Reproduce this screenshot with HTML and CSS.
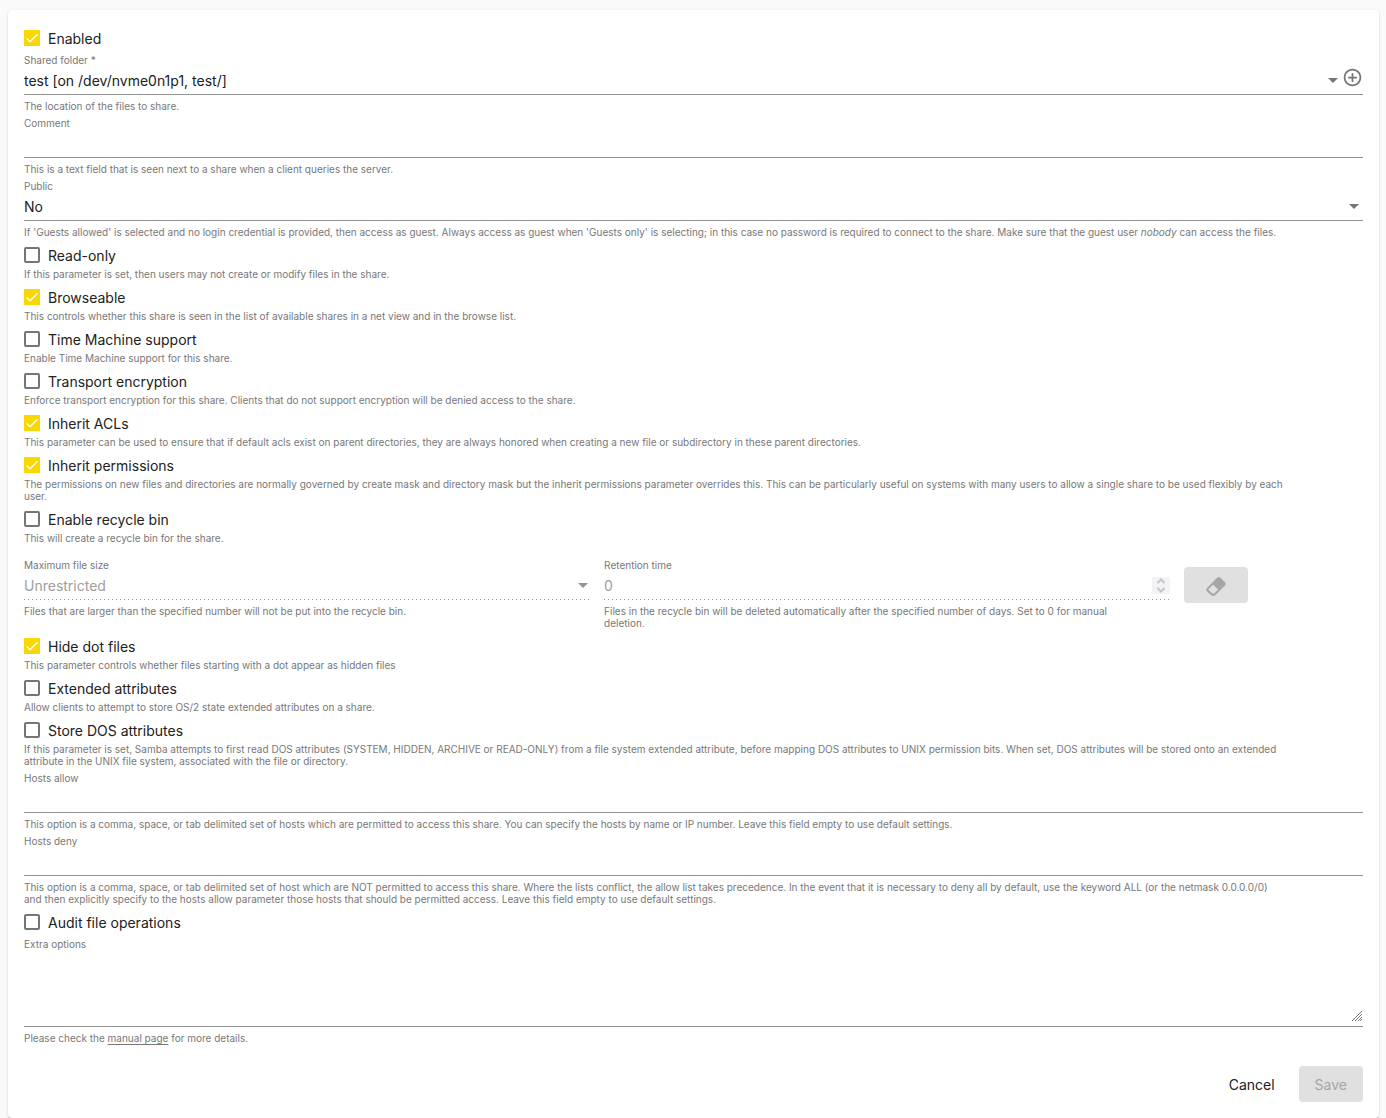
FILE: index.html
```html
<!DOCTYPE html>
<html lang="en">
<head>
    <meta charset="UTF-8">
    <meta name="viewport" content="width=device-width, initial-scale=1.0">
    <title>SMB/CIFS Share</title>
    <link rel="stylesheet" href="styles.css">
</head>
<body>
    <form class="card">
        <div class="check">
            <label><input type="checkbox" checked>Enabled</label>
        </div>

        <div class="field">
            <label for="sharedFolder">Shared folder *</label>
            <div class="control">
                <select id="sharedFolder">
                    <option>test [on /dev/nvme0n1p1, test/]</option>
                </select>
                <span class="arrow"></span>
                <button type="button" class="icon-btn" aria-label="Create">
                    <svg viewBox="0 0 24 24"><path d="M13 7h-2v4H7v2h4v4h2v-4h4v-2h-4V7zm-1-5C6.48 2 2 6.48 2 12s4.480 10 10 10 10-4.480 10-10S17.520 2 12 2zm0 18c-4.410 0-8-3.590-8-8s3.590-8 8-8 8 3.590 8 8-3.590 8-8 8z"/></svg>
                </button>
            </div>
            <p class="hint">The location of the files to share.</p>
        </div>

        <div class="field">
            <label for="comment">Comment</label>
            <div class="control"><input type="text" id="comment"></div>
            <p class="hint">This is a text field that is seen next to a share when a client queries the server.</p>
        </div>

        <div class="field">
            <label for="public">Public</label>
            <div class="control">
                <select id="public">
                    <option>No</option>
                    <option>Guests allowed</option>
                    <option>Guests only</option>
                </select>
                <span class="arrow arrow-end"></span>
            </div>
            <p class="hint">If 'Guests allowed' is selected and no login credential is provided, then access as guest. Always access as guest when 'Guests only' is selecting; in this case no password is required to connect to the share. Make sure that the guest user <em>nobody</em> can access the files.</p>
        </div>

        <div class="check">
            <label><input type="checkbox">Read-only</label>
            <p class="hint">If this parameter is set, then users may not create or modify files in the share.</p>
        </div>
        <div class="check">
            <label><input type="checkbox" checked>Browseable</label>
            <p class="hint">This controls whether this share is seen in the list of available shares in a net view and in the browse list.</p>
        </div>
        <div class="check">
            <label><input type="checkbox">Time Machine support</label>
            <p class="hint">Enable Time Machine support for this share.</p>
        </div>
        <div class="check">
            <label><input type="checkbox">Transport encryption</label>
            <p class="hint">Enforce transport encryption for this share. Clients that do not support encryption will be denied access to the share.</p>
        </div>
        <div class="check">
            <label><input type="checkbox" checked>Inherit ACLs</label>
            <p class="hint">This parameter can be used to ensure that if default acls exist on parent directories, they are always honored when creating a new file or subdirectory in these parent directories.</p>
        </div>
        <div class="check">
            <label><input type="checkbox" checked>Inherit permissions</label>
            <p class="hint">The permissions on new files and directories are normally governed by create mask and directory mask but the inherit permissions parameter overrides this. This can be particularly useful on systems with many users to allow a single share to be used flexibly by each user.</p>
        </div>
        <div class="check">
            <label><input type="checkbox">Enable recycle bin</label>
            <p class="hint">This will create a recycle bin for the share.</p>
        </div>

        <div class="recycle">
            <div class="field disabled">
                <label for="maxSize">Maximum file size</label>
                <div class="control">
                    <select id="maxSize" disabled>
                        <option>Unrestricted</option>
                    </select>
                    <span class="arrow"></span>
                </div>
                <p class="hint">Files that are larger than the specified number will not be put into the recycle bin.</p>
            </div>
            <div class="field disabled">
                <label for="retention">Retention time</label>
                <div class="control">
                    <input type="number" id="retention" value="0" disabled>
                    <svg class="spinner" viewBox="0 0 18 17"><path d="M5.500 6 9 2.500 12.500 6M5.500 11 9 14.500 12.500 11"/></svg>
                </div>
                <p class="hint">Files in the recycle bin will be deleted automatically after the specified number of days. Set to 0 for manual deletion.</p>
            </div>
            <button type="button" class="btn btn-disabled" aria-label="Empty recycle bin" disabled>
                <svg viewBox="0 0 24 24"><path d="M16.240 3.560l4.950 4.940c.78.790.78 2.050 0 2.840L12 20.530a4.008 4.008 0 0 1-5.660 0L2.810 17c-.78-.79-.78-2.050 0-2.840l10.600-10.600c.79-.78 2.050-.78 2.830 0M4.220 15.580l3.540 3.530c.78.790 2.040.790 2.830 0l3.530-3.530-4.950-4.950-4.950 4.950z"/></svg>
            </button>
        </div>

        <div class="check">
            <label><input type="checkbox" checked>Hide dot files</label>
            <p class="hint">This parameter controls whether files starting with a dot appear as hidden files</p>
        </div>
        <div class="check">
            <label><input type="checkbox">Extended attributes</label>
            <p class="hint">Allow clients to attempt to store OS/2 state extended attributes on a share.</p>
        </div>
        <div class="check">
            <label><input type="checkbox">Store DOS attributes</label>
            <p class="hint">If this parameter is set, Samba attempts to first read DOS attributes (SYSTEM, HIDDEN, ARCHIVE or READ-ONLY) from a file system extended attribute, before mapping DOS attributes to UNIX permission bits. When set, DOS attributes will be stored onto an extended attribute in the UNIX file system, associated with the file or directory.</p>
        </div>

        <div class="field">
            <label for="hostsAllow">Hosts allow</label>
            <div class="control"><input type="text" id="hostsAllow"></div>
            <p class="hint">This option is a comma, space, or tab delimited set of hosts which are permitted to access this share. You can specify the hosts by name or IP number. Leave this field empty to use default settings.</p>
        </div>
        <div class="field">
            <label for="hostsDeny">Hosts deny</label>
            <div class="control"><input type="text" id="hostsDeny"></div>
            <p class="hint">This option is a comma, space, or tab delimited set of host which are NOT permitted to access this share. Where the lists conflict, the allow list takes precedence. In the event that it is necessary to deny all by default, use the keyword ALL (or the netmask 0.0.0.0/0) and then explicitly specify to the hosts allow parameter those hosts that should be permitted access. Leave this field empty to use default settings.</p>
        </div>

        <div class="check">
            <label><input type="checkbox">Audit file operations</label>
        </div>

        <div class="field">
            <label for="extraOptions">Extra options</label>
            <div class="control"><textarea id="extraOptions"></textarea></div>
            <p class="hint">Please check the <a href="#">manual page</a> for more details.</p>
        </div>

        <div class="actions">
            <button type="button" class="btn">Cancel</button>
            <button type="submit" class="btn btn-disabled" disabled>Save</button>
        </div>
    </form>
</body>
</html>
```
FILE: styles.css
```css
* {
    box-sizing: border-box;
}
body {
    margin: 0;
    padding: 10px 7px 0 8px;
    background-color: #fafafa;
    color: #212121;
    font-family: Inter, "Liberation Sans", sans-serif;
    font-size: 14px;
}
.card {
    padding: 16px;
    background: #fff;
    border-radius: 4px;
    box-shadow: 0 2px 1px -1px rgba(0,0,0,0.2), 0 1px 1px rgba(0,0,0,0.14), 0 1px 3px rgba(0,0,0,0.12);
}
input, select, textarea, button {
    font: inherit;
    color: inherit;
}
.hint {
    max-width: 1262px;
    margin: 0;
    padding-bottom: 1px;
    font-size: 10px;
    line-height: 12px;
    color: #787878;
}
.hint a {
    color: inherit;
    text-underline-offset: 2px;
}

/* Checkboxes */
.check {
    margin-bottom: 4px;
}
.check label {
    display: flex;
    align-items: center;
    gap: 8px;
    height: 24px;
}
.check .hint {
    margin-top: 1px;
}
.check input {
    appearance: none;
    width: 16px;
    height: 16px;
    margin: 0;
    border: 2px solid #757575;
    border-radius: 2px;
}
.check input:checked {
    border: 0;
    border-radius: 0;
    background: #f9d700 url("data:image/svg+xml,%3Csvg xmlns='http://www.w3.org/2000/svg' viewBox='0 0 24 24'%3E%3Cpath d='M4.1 12.7 9 17.6 20.3 6.3' fill='none' stroke='white' stroke-width='2.1'/%3E%3C/svg%3E") center / 16px no-repeat;
}

/* Text fields */
.field {
    margin-bottom: 4px;
}
.field label {
    display: block;
    font-size: 10px;
    line-height: 13px;
    color: #787878;
}
.control {
    display: flex;
    align-items: center;
    margin-bottom: 5px;
    border-bottom: 1px solid #949494;
}
.control input, .control select, .control textarea {
    flex: 1;
    min-width: 0;
    height: 27px;
    padding: 0;
    border: 0;
    outline: 0;
    background: transparent;
    appearance: none;
}
.control input[type="number"] {
    appearance: textfield;
}
.control textarea {
    height: 75px;
    resize: vertical;
}
.control textarea::-webkit-resizer {
    background: url("data:image/svg+xml,%3Csvg xmlns='http://www.w3.org/2000/svg' width='15' height='15'%3E%3Cpath d='M4 10 14 0M7 10l7-7M10 10l4-4M12 10l2-2' fill='none' stroke='%23777'/%3E%3C/svg%3E") no-repeat;
}
.arrow {
    margin: 0 2px 0 4px;
    border: 5px solid transparent;
    border-top-color: #757575;
    border-bottom: 0;
}
.arrow-end {
    margin-right: 4px;
}
.icon-btn {
    width: 21px;
    height: 21px;
    margin: 0 0 6px 2px;
    padding: 0;
    border: 0;
    background: none;
}
.icon-btn svg {
    display: block;
    fill: #757575;
}
.disabled .control {
    color: #9e9e9e;
    border-bottom: 0;
    background: repeating-linear-gradient(to right, #949494 0 1px, transparent 1px 4px) bottom / 100% 1px no-repeat;
    padding-bottom: 1px;
}
.disabled .control select, .disabled .control input {
    opacity: 1;
    color: inherit;
}
.disabled .arrow {
    border-top-color: #949494;
}
.spinner {
    width: 18px;
    height: 17px;
    background: #f3f3f5;
    fill: none;
    stroke: #c4c4c6;
    stroke-width: 2;
}
.recycle {
    display: grid;
    grid-template-columns: 19fr 19fr 6fr;
    gap: 14px;
    padding-top: 10px;
}
.recycle .hint {
    padding-right: 6%;
}

/* Buttons */
.btn {
    min-width: 64px;
    height: 36px;
    padding: 0 16px;
    border: 0;
    border-radius: 4px;
    background: none;
}
.btn-disabled {
    background: #e0e0e0;
    color: #a6a6a6;
}
.recycle .btn {
    width: 64px;
    margin-top: 8px;
    padding: 0;
}
.recycle .btn svg {
    display: block;
    width: 24px;
    height: 24px;
    margin: 2px auto 0;
    fill: #a6a6a6;
}
.actions {
    display: flex;
    justify-content: flex-end;
    gap: 8px;
    padding-top: 17px;
}
```
